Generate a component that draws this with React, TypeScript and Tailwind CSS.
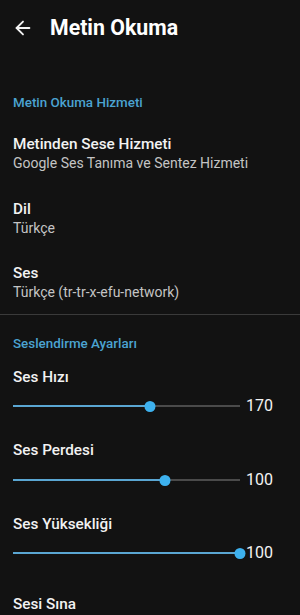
import { ArrowLeft } from 'lucide-react';

interface SliderRowProps {
  value: number;
  fraction: number;
}

function SliderRow({ value, fraction }: SliderRowProps) {
  return (
    <div className="flex h-[20px] items-center pl-[13px]">
      <div className="relative h-[20px] w-[227px]">
        <div className="absolute left-0 right-0 top-[9px] h-[2px] bg-[#4a4a4a]" />
        <div
          className="absolute left-0 top-[9px] h-[2px] bg-[#5aa6d2]"
          style={{ width: `${fraction * 100}%` }}
        />
        <div
          className="absolute top-[4.5px] h-[11px] w-[11px] -translate-x-1/2 rounded-full bg-[#3db1ee]"
          style={{ left: `${fraction * 100}%` }}
        />
      </div>
      <span className="ml-[6px] text-[16px] leading-[20px] text-[#f2f2f2]">{value}</span>
    </div>
  );
}

function Item({ title, subtitle }: { title: string; subtitle: string }) {
  return (
    <div className="flex h-[65px] flex-col justify-center px-[13px]">
      <div className="text-[15.3px] font-medium leading-[20px] text-[#f2f2f2]">{title}</div>
      <div className="text-[14px] leading-[18px] text-[#c4c4c4]">{subtitle}</div>
    </div>
  );
}

export default function App() {
  return (
    <div className="h-[615px] w-[300px] overflow-hidden bg-[#121212] font-['Roboto',sans-serif]">
      {/* Top bar */}
      <div className="flex h-[56px] items-center">
        <ArrowLeft size={22} strokeWidth={2} className="ml-[12px] text-[#f2f2f2]" />
        <h1 className="ml-[16px] text-[21.3px] font-bold leading-[28px] text-white">Metin Okuma</h1>
      </div>

      <div className="px-[13px] pb-[9px] pt-[39px] text-[13.4px] font-medium leading-[16px] text-[#4ba3d1]">
        Metin Okuma Hizmeti
      </div>
      <Item title="Metinden Sese Hizmeti" subtitle="Google Ses Tanıma ve Sentez Hizmeti" />
      <Item title="Dil" subtitle="Türkçe" />
      <div className="flex h-[64px] flex-col justify-center px-[13px]">
        <div className="text-[15.3px] font-medium leading-[20px] text-[#f2f2f2]">Ses</div>
        <div className="text-[14px] leading-[18px] text-[#c4c4c4]">Türkçe (tr-tr-x-efu-network)</div>
      </div>
      <div className="h-px bg-[#3a3a3a]" />

      <div className="px-[13px] pt-[21px] text-[13.4px] font-medium leading-[16px] text-[#4ba3d1]">
        Seslendirme Ayarları
      </div>

      <div className="mt-[15px] px-[13px] text-[15.3px] font-medium leading-[20px] text-[#f2f2f2]">Ses Hızı</div>
      <div className="mt-[9px]">
        <SliderRow value={170} fraction={0.603} />
      </div>

      <div className="mt-[24px] px-[13px] text-[15.3px] font-medium leading-[20px] text-[#f2f2f2]">Ses Perdesi</div>
      <div className="mt-[10px]">
        <SliderRow value={100} fraction={0.67} />
      </div>

      <div className="mt-[24px] px-[13px] text-[15.3px] font-medium leading-[20px] text-[#f2f2f2]">Ses Yüksekliği</div>
      <div className="mt-[9px]">
        <SliderRow value={100} fraction={1} />
      </div>

      <div className="mt-[31px] px-[13px] text-[15.3px] font-medium leading-[20px] text-[#f2f2f2]">Sesi Sına</div>
    </div>
  );
}
